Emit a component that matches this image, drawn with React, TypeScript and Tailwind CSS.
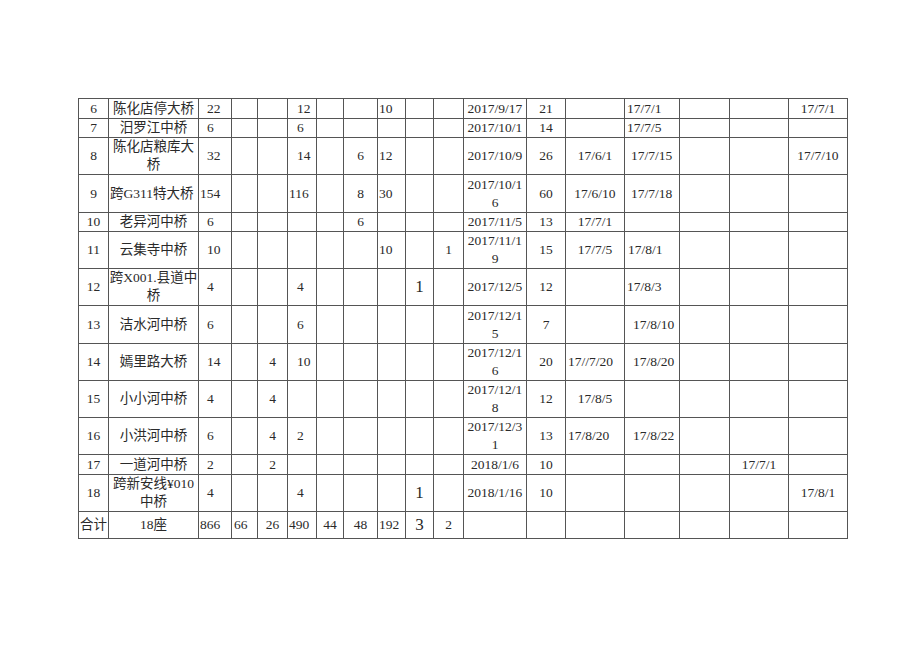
import React from "react";

const cols = [
  "w-[30px]", "w-[90px]", "w-[33px]", "w-[26px]", "w-[30px]", "w-[29px]", "w-[27px]", "w-[34px]", "w-[28px]",
  "w-[28px]", "w-[30px]", "w-[63px]", "w-[39px]", "w-[59px]", "w-[55px]", "w-[50px]", "w-[59px]", "w-[59px]",
];
const heights = [
  "h-[20px]", "h-[19px]", "h-[37px]", "h-[38px]", "h-[19px]", "h-[37px]", "h-[37px]",
  "h-[38px]", "h-[37px]", "h-[37px]", "h-[36px]", "h-[20px]", "h-[37px]", "h-[27px]",
];

const rows: string[][] = [
  ["6", "陈化店停大桥", "22", "", "", "12", "", "", "10", "", "", "2017/9/17", "21", "", "17/7/1", "", "", "17/7/1"],
  ["7", "汨罗江中桥", "6", "", "", "6", "", "", "", "", "", "2017/10/1", "14", "", "17/7/5", "", "", ""],
  ["8", "陈化店粮库大\n桥", "32", "", "", "14", "", "6", "12", "", "", "2017/10/9", "26", "17/6/1", "17/7/15", "", "", "17/7/10"],
  ["9", "跨G311特大桥", "154", "", "", "116", "", "8", "30", "", "", "2017/10/1\n6", "60", "17/6/10", "17/7/18", "", "", ""],
  ["10", "老异河中桥", "6", "", "", "", "", "6", "", "", "", "2017/11/5", "13", "17/7/1", "", "", "", ""],
  ["11", "云集寺中桥", "10", "", "", "", "", "", "10", "", "1", "2017/11/1\n9", "15", "17/7/5", "17/8/1", "", "", ""],
  ["12", "跨X001.县道中\n桥", "4", "", "", "4", "", "", "", "1", "", "2017/12/5", "12", "", "17/8/3", "", "", ""],
  ["13", "洁水河中桥", "6", "", "", "6", "", "", "", "", "", "2017/12/1\n5", "7", "", "17/8/10", "", "", ""],
  ["14", "嫣里路大桥", "14", "", "4", "10", "", "", "", "", "", "2017/12/1\n6", "20", "17//7/20", "17/8/20", "", "", ""],
  ["15", "小小河中桥", "4", "", "4", "", "", "", "", "", "", "2017/12/1\n8", "12", "17/8/5", "", "", "", ""],
  ["16", "小洪河中桥", "6", "", "4", "2", "", "", "", "", "", "2017/12/3\n1", "13", "17/8/20", "17/8/22", "", "", ""],
  ["17", "一道河中桥", "2", "", "2", "", "", "", "", "", "", "2018/1/6", "10", "", "", "", "17/7/1", ""],
  ["18", "跨新安线¥010\n中桥", "4", "", "", "4", "", "", "", "1", "", "2018/1/16", "10", "", "", "", "", "17/8/1"],
  ["合计", "18座", "866", "66", "26", "490", "44", "48", "192", "3", "2", "", "", "", "", "", "", ""],
];

// default alignment per column
const colAlign = [
  "text-center",
  "text-center",
  "text-left pl-[8px]",
  "text-left pl-[2px]",
  "text-center",
  "text-left pl-[9px]",
  "text-center",
  "text-center",
  "text-left pl-px",
  "text-center text-[17px]",
  "text-center",
  "text-center",
  "text-center",
  "text-center",
  "text-left pl-[2px]",
  "text-center",
  "text-center",
  "text-center",
];

const overrides: Record<string, string> = {
  "3-1": "text-left pl-px",
  "3-2": "text-left pl-px",
  "13-2": "text-left pl-px",
  "3-5": "text-left pl-px",
  "13-5": "text-left pl-px",
  "8-13": "text-left pl-[2px]",
  "10-13": "text-left pl-[2px]",
  "2-14": "text-left pl-[6px]",
  "3-14": "text-left pl-[6px]",
  "5-14": "text-left pl-[3px]",
  "7-14": "text-left pl-[8px]",
  "8-14": "text-left pl-[8px]",
  "10-14": "text-left pl-[8px]",
};

export default function App() {
  return (
    <div className="w-[920px] h-[651px] bg-white pt-[98px] pl-[78px] font-['Liberation_Serif','Noto_Sans_CJK_SC',serif] text-[13.5px] text-[#2a2a2a]">
      <table className="table-fixed border-collapse w-[769px]">
        <colgroup>
          {cols.map((w, i) => (
            <col key={i} className={w} />
          ))}
        </colgroup>
        <tbody>
          {rows.map((r, ri) => (
            <tr key={ri} className={heights[ri]}>
              {r.map((t, ci) => (
                <td
                  key={ci}
                  className={
                    "border border-[#555] p-0 align-middle whitespace-pre leading-[18px] " +
                    (overrides[`${ri}-${ci}`] ?? colAlign[ci])
                  }
                >
                  {t}
                </td>
              ))}
            </tr>
          ))}
        </tbody>
      </table>
    </div>
  );
}
